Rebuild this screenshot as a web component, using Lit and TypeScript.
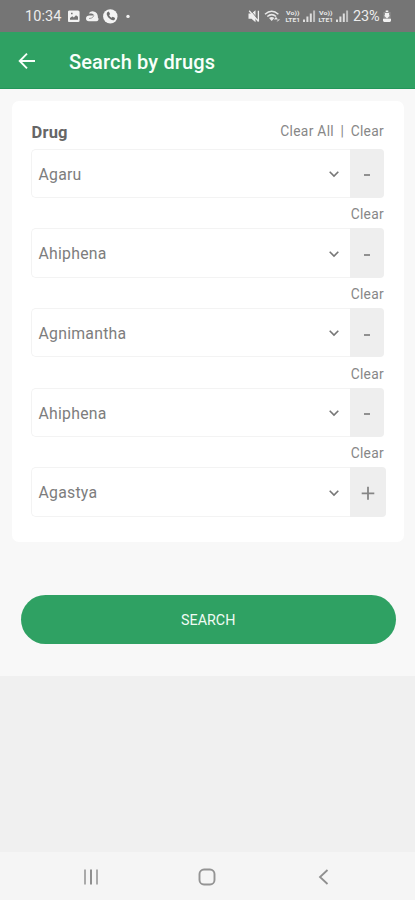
import { LitElement, html, css, svg } from "lit";
import { customElement } from "lit/decorators.js";

@customElement("status-bar")
class StatusBar extends LitElement {
  static styles = css`
    :host { display: flex; justify-content: space-between; height: 32px; box-sizing: border-box;
      padding: 0 23px 0 25px; background: #757575; color: #ececec; font: 14.5px/32px Roboto, sans-serif; }
    .left, .right { display: flex; align-items: center; }
    .time { width: 43px; letter-spacing: 0.1px; white-space: nowrap; padding-top: 1px; }
    .pct { width: 29px; margin-left: 4px; margin-right: 1px; font-size: 14.5px; letter-spacing: -0.1px; padding-top: 1px; }
    svg { display: block; flex: none; }
    .lte { font: 700 5.8px Roboto, sans-serif; }
  `;

  private volte(x: number) {
    return svg`<g class="lte" fill="#e8e8e8">
      <text x=${x + 0.5} y="15.3" textLength="13.5" lengthAdjust="spacingAndGlyphs">Vo))</text>
      <text x=${x} y="22.3" textLength="14.5" lengthAdjust="spacingAndGlyphs">LTE1</text></g>`;
  }

  private bars(x: number) {
    return svg`<g fill="#dedede" transform="translate(${x} 0)">
      <path d="M0 19.500h2V22H0zM3.400 16.500h2V22h-2zM6.800 13.500h2V22h-2z"/>
      <path opacity=".7" d="M10.100 10.500h2V22h-2z"/></g>`;
  }

  render() {
    return html`
      <div class="left">
        <span class="time">10:34</span>
        <svg width="64" height="32" viewBox="68 0 64 32">
          <path fill="#f2f2f2" fill-rule="evenodd" d="M69.500 10.500h8.500a1.600 1.600 0 0 1 1.600 1.600v8.400a1.600 1.600 0 0 1-1.600 1.600h-8.500a1.600 1.600 0 0 1-1.600-1.600v-8.400a1.600 1.600 0 0 1 1.600-1.600zM70 19.800h8v-3l-2-1.600-2.200 2.300-1.500-1.300L70 18zM71 12.700v1.600h1.600v-1.600z"/>
          <path fill="#f2f2f2" d="M88.800 21.300h7.400a2.300 2.300 0 0 0 1.700-3.900c.2-3.400-1.700-5.700-4.500-6-2-.2-3.600.6-4.500 2h2.600c1.400.1 2.300.9 2.500 2.100h-4.600c-1.900.1-3.400 1.200-3.400 3 0 1.700 1.200 2.800 2.800 2.800z"/>
          <path fill="none" stroke="#8a8a8a" stroke-width=".8" d="M89 18.500q3 .6 5-2.800"/>
          <circle cx="110.300" cy="16.400" r="7.200" fill="#f4f4f4"/>
          <path fill="#6d6d6d" d="M107.300 12.200l1.500-.6 1.300 2.500-1 1.200c.5 1.100 1.300 1.900 2.400 2.400l1.200-1 2.400 1.300-.5 1.700c-1 .8-2.300.7-3.800-.2-1.700-1-2.900-2.300-3.600-3.900-.6-1.400-.6-2.600.1-3.400z"/>
          <circle cx="128" cy="16.400" r="1.700" fill="#f2f2f2"/>
        </svg>
      </div>
      <div class="right">
        <svg width="101" height="32" viewBox="248 0 101 32">
          <path fill="#efefef" d="M248.500 13.500h3l4-3.300v12l-4-3.400h-3z"/>
          <path fill="none" stroke="#757575" stroke-width="1" d="M250.200 10l8.500 10"/>
          <path fill="none" stroke="#efefef" stroke-width="1.300" d="M249.200 10.800l9.300 10.700M258.400 10.800v10.700"/>
          <path fill="none" stroke="#e8e8e8" stroke-width="1.500" d="M265 14.200q6.700-6 13.400 0M267.300 16.500q4.400-3.700 8.800 0"/>
          <path fill="#e8e8e8" d="M269 18q2.700-2 5.400 0L271.700 21zM276 16.800l2 2.600h-4zM276.500 22l1.700-2.500h2z"/>
          ${this.volte(285.500)}${this.bars(303)}${this.volte(318.500)}${this.bars(336)}
        </svg>
        <span class="pct">23%</span>
        <svg width="9" height="32" viewBox="383 0 9 32">
          <path fill="#929292" d="M383.500 12h7v9h-7z"/>
          <path fill="#f2f2f2" d="M385.700 10.500h2.600v1.500h-2.600zM383 18.700h8v1.900a1.300 1.300 0 0 1-1.300 1.300h-5.400a1.300 1.300 0 0 1-1.300-1.300zM385 13h4v2.600h1l-3 3-3-3h1z"/>
        </svg>
      </div>`;
  }
}

@customElement("drug-row")
class DrugRow extends LitElement {
  static properties = { name: { type: String }, last: { type: Boolean } };
  declare name: string;
  declare last: boolean;

  static styles = css`
    :host { display: flex; height: 49.600px; width: 353px; font-family: Roboto, sans-serif; }
    .select { flex: none; width: 319px; box-sizing: border-box; display: flex; align-items: center;
      justify-content: space-between; padding: 1.500px 10.500px 0 6.500px; border: 1px solid #f3f3f3;
      border-right: 0; border-radius: 5px 0 0 5px; color: #7d7d7d; font-size: 15.800px; letter-spacing: 0.250px;
      background: #fff; }
    .step { flex: none; width: 34px; display: flex; align-items: center; justify-content: center;
      background: #eeeeee; border-radius: 0 4px 4px 0; }
    .step.add { width: 35.500px; }
    svg { display: block; }
  `;

  render() {
    return html`
      <div class="select"><span>${this.name}</span>
        <svg width="12" height="12" viewBox="0 0 12 12"><path d="M1.700 3.800L6 8.100l4.300-4.300" fill="none" stroke="#777" stroke-width="1.600"/></svg>
      </div>
      <div class="step ${this.last ? "add" : ""}">
        <svg width="14" height="16" viewBox="0 0 14 16"><path d=${this.last ? "M.7 9.300h12.600M7 2.800v13" : "M4 10h6"}
          fill="none" stroke="#858585" stroke-width="1.800"/></svg>
      </div>`;
  }
}

@customElement("app-root")
class AppRoot extends LitElement {
  private drugs = ["Agaru", "Ahiphena", "Agnimantha", "Ahiphena", "Agastya"];

  static styles = css`
    :host { display: flex; flex-direction: column; height: 900px; background: #f0f0f0;
      font-family: Roboto, sans-serif; overflow: hidden; }
    .bar { flex: none; height: 56.500px; box-sizing: border-box; display: flex; align-items: center; background: #2fa163;
      border-bottom: 1px solid #22965a; padding: 3px 18px 0; gap: 33px; color: #f8fffa; }
    .title { font-size: 20px; font-weight: 500; letter-spacing: 0.150px; padding-top: 1px; }
    .page { flex: none; height: 587.500px; box-sizing: border-box; background: #f8f8f8; padding: 12.500px 11px 0 12px; }
    .card { height: 441px; box-sizing: border-box; background: #fff; border-radius: 7px; padding: 14px 19px 0; }
    .head, .clear { display: flex; color: #878787; font-size: 13.800px; letter-spacing: 0.300px; }
    .head { height: 33.500px; justify-content: space-between; width: 353px; line-height: 32px; }
    .label { color: #666; font-size: 16.500px; font-weight: 700; letter-spacing: 0.200px; line-height: 36px; padding-left: 0.500px; }
    .links { display: flex; gap: 6.500px; }
    .clear { height: 30.100px; box-sizing: border-box; padding-top: 2px; width: 353px; justify-content: flex-end; align-items: center; }
    .search { height: 49px; margin: 53px 8px 0 8.500px; border-radius: 25px; background: #2fa163; color: #f0fbf4;
      display: flex; align-items: center; justify-content: center; font-size: 14.300px; }
    .nav { flex: none; margin-top: auto; height: 48px; box-sizing: border-box; background: #f5f5f5; display: flex; align-items: center;
      justify-content: space-between; padding: 2px 84px 0 83px; }
    svg { display: block; }
  `;

  render() {
    return html`
      <status-bar></status-bar>
      <header class="bar">
        <svg width="18" height="18" viewBox="0 0 18 18"><path d="M17 9H2M9 1.700L1.700 9 9 16.300" fill="none" stroke="#f8fffa" stroke-width="1.900"/></svg>
        <span class="title">Search by drugs</span>
      </header>
      <main class="page">
        <section class="card">
          <div class="head"><span class="label">Drug</span>
            <div class="links"><span>Clear All</span><span>|</span><span>Clear</span></div>
          </div>
          ${this.drugs.map((d, i) => html`
            ${i ? html`<div class="clear">Clear</div>` : ""}
            <drug-row .name=${d} .last=${i === this.drugs.length - 1}></drug-row>`)}
        </section>
        <div class="search">SEARCH</div>
      </main>
      <nav class="nav">
        <svg width="16" height="18" viewBox="0 0 16 18"><path d="M2 1.500v15M14 1.500v15" stroke="#aaa" stroke-width="2"/><path d="M8 1.500v15" stroke="#8f8f8f" stroke-width="2"/></svg>
        <svg width="18" height="18" viewBox="0 0 18 18"><rect x="1.500" y="1.500" width="15" height="15" rx="4.500" fill="none" stroke="#949494" stroke-width="1.900"/></svg>
        <svg width="16" height="18" viewBox="0 0 16 18"><path d="M12.500 2L5 9l7.500 7" fill="none" stroke="#8f8f8f" stroke-width="1.800"/></svg>
      </nav>`;
  }
}
